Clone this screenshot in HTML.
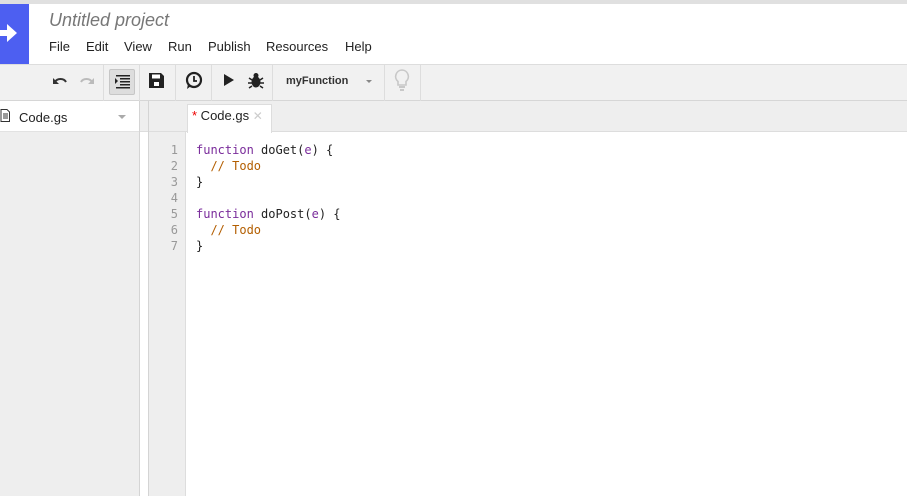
<!DOCTYPE html>
<html><head><meta charset="utf-8"><style>
*{margin:0;padding:0;box-sizing:border-box}
body{width:907px;height:496px;overflow:hidden;background:#fff;font-family:"Liberation Sans",Arial,sans-serif;position:relative}
.abs{position:absolute}
.mono{font-family:"DejaVu Sans Mono","Liberation Mono",monospace;font-size:12px}
.sep{position:absolute;top:64px;width:1px;height:37px;background:#ddd}
.m{position:absolute;top:39px;font-size:13px;color:#222}
</style></head><body>
<div class="abs" style="left:0;top:0;width:907px;height:4px;background:#e0e0e0"></div>
<div class="abs" style="left:0;top:4px;width:29px;height:60px;background:#4d5ff1"></div>
<svg class="abs" style="left:0;top:22px" width="20" height="22" viewBox="0 0 20 22"><path d="M0 8h7V2l10 9-10 9v-6H0z" fill="#fff"/></svg>
<div class="abs" style="left:49px;top:10px;font-size:18px;font-style:italic;color:#777">Untitled project</div>
<span class="m" style="left:49px">File</span><span class="m" style="left:86px">Edit</span><span class="m" style="left:124px">View</span><span class="m" style="left:168px">Run</span><span class="m" style="left:208px">Publish</span><span class="m" style="left:266px">Resources</span><span class="m" style="left:345px">Help</span>
<div class="abs" style="left:0;top:64px;width:907px;height:37px;background:#f1f1f1;border-top:1px solid #ddd;border-bottom:1px solid #d6d6d6"></div>
<div class="sep" style="left:103px"></div><div class="sep" style="left:139px"></div><div class="sep" style="left:175px"></div><div class="sep" style="left:211px"></div><div class="sep" style="left:272px"></div><div class="sep" style="left:384px"></div><div class="sep" style="left:420px"></div>
<svg class="abs" style="left:50px;top:72px" width="50" height="18"><path d="M5 10a6 5 0 0 1 11 0" stroke="#333" stroke-width="2" fill="none"/><path d="M3 6v6h6z" fill="#333"/><path d="M31 10a6 5 0 0 1 11 0" stroke="#bbb" stroke-width="2" fill="none"/><path d="M44 6v6h-6z" fill="#bbb"/></svg>
<div class="abs" style="left:109px;top:69px;width:26px;height:26px;background:#ddd;border:1px solid #c6c6c6;border-radius:2px"></div>
<svg class="abs" style="left:113px;top:74px" width="18" height="16"><g fill="#222"><rect x="3" y="1" width="14" height="1.5"/><rect x="7" y="4" width="10" height="1.5"/><rect x="7" y="7" width="10" height="1.5"/><rect x="7" y="10" width="10" height="1.5"/><rect x="3" y="13" width="14" height="1.5"/><path d="M2 4l3 3-3 3z"/></g></svg>
<svg class="abs" style="left:149px;top:73px" width="15" height="15"><path d="M0 0h12l3 3v12H0z" fill="#222"/><rect x="3" y="1.5" width="8" height="4" fill="#fff"/><rect x="5" y="9" width="5" height="4" fill="#fff"/></svg>
<svg class="abs" style="left:184px;top:71px" width="20" height="20"><circle cx="10" cy="9" r="7" stroke="#222" stroke-width="2.2" fill="none"/><path d="M10 5v5h3" stroke="#222" stroke-width="1.8" fill="none"/><path d="M4 13l-1 5 4-3z" fill="#222"/></svg>
<svg class="abs" style="left:224px;top:74px" width="10" height="12"><path d="M0 0l10 6-10 6z" fill="#222"/></svg>
<svg class="abs" style="left:248px;top:71px" width="16" height="18"><g fill="#222"><ellipse cx="8" cy="11" rx="4.5" ry="5.5"/><circle cx="8" cy="4.5" r="2.5"/></g><g stroke="#222" stroke-width="1.5"><path d="M1 7l3 2M15 7l-3 2M0 12h4M16 12h-4M1 17l3-2M15 17l-3-2"/></g></svg>
<div class="abs" style="left:286px;top:75px;font-size:11px;font-weight:bold;color:#333">myFunction</div>
<div class="abs" style="left:366px;top:80px;width:0;height:0;border:3px solid transparent;border-top:3px solid #888"></div>
<svg class="abs" style="left:394px;top:69px" width="16" height="24"><path d="M8 1a6.5 6.5 0 0 0-4 11.5V16h8v-3.5A6.5 6.5 0 0 0 8 1z" stroke="#c8c8c8" stroke-width="1.6" fill="none"/><rect x="5" y="17" width="6" height="2" fill="#c8c8c8"/><rect x="6" y="20" width="4" height="2" fill="#c8c8c8"/></svg>
<div class="abs" style="left:0;top:101px;width:140px;height:395px;background:#eee;border-right:1px solid #d4d4d4"></div>
<div class="abs" style="left:0;top:101px;width:139px;height:31px;background:#fff;border-bottom:1px solid #e2e2e2"></div>
<svg class="abs" style="left:0;top:109px" width="10" height="13"><path d="M1 .5h6l2.5 2.5v9.5H1z" stroke="#333" fill="#fff"/><path d="M3 5h5M3 7h5M3 9h5" stroke="#333"/></svg>
<div class="abs" style="left:19px;top:110px;font-size:13px;color:#222">Code.gs</div>
<div class="abs" style="left:118px;top:115px;width:0;height:0;border:4px solid transparent;border-top:4px solid #aaa"></div>
<div class="abs" style="left:140px;top:101px;width:767px;height:31px;background:#eee;border-bottom:1px solid #ddd"></div>
<div class="abs" style="left:148px;top:101px;width:1px;height:395px;background:#d4d4d4"></div>
<div class="abs" style="left:149px;top:132px;width:37px;height:364px;background:#eee;border-right:1px solid #ddd"></div>
<div class="abs" style="left:187px;top:104px;width:85px;height:29px;background:#fff;border:1px solid #ddd;border-bottom:none"></div>
<div class="abs" style="left:192px;top:108px;font-size:13px;color:#222"><span style="color:#e00">*</span> Code.gs <span style="color:#ccc;font-size:12px">✕</span></div>
<div class="abs" style="left:187px;top:133px;width:720px;height:362px;background:#fff"></div>
<div class="abs mono" style="left:160px;top:142px;width:18px;text-align:right;line-height:16px;color:#999">1<br>2<br>3<br>4<br>5<br>6<br>7</div>
<div class="abs mono" style="left:196px;top:142px;line-height:16px;color:#222;white-space:pre"><span style="color:#7a2c9b">function</span> doGet(<span style="color:#7a2c9b">e</span>) {
  <span style="color:#b35e00">// Todo</span>
}

<span style="color:#7a2c9b">function</span> doPost(<span style="color:#7a2c9b">e</span>) {
  <span style="color:#b35e00">// Todo</span>
}</div>
</body></html>
